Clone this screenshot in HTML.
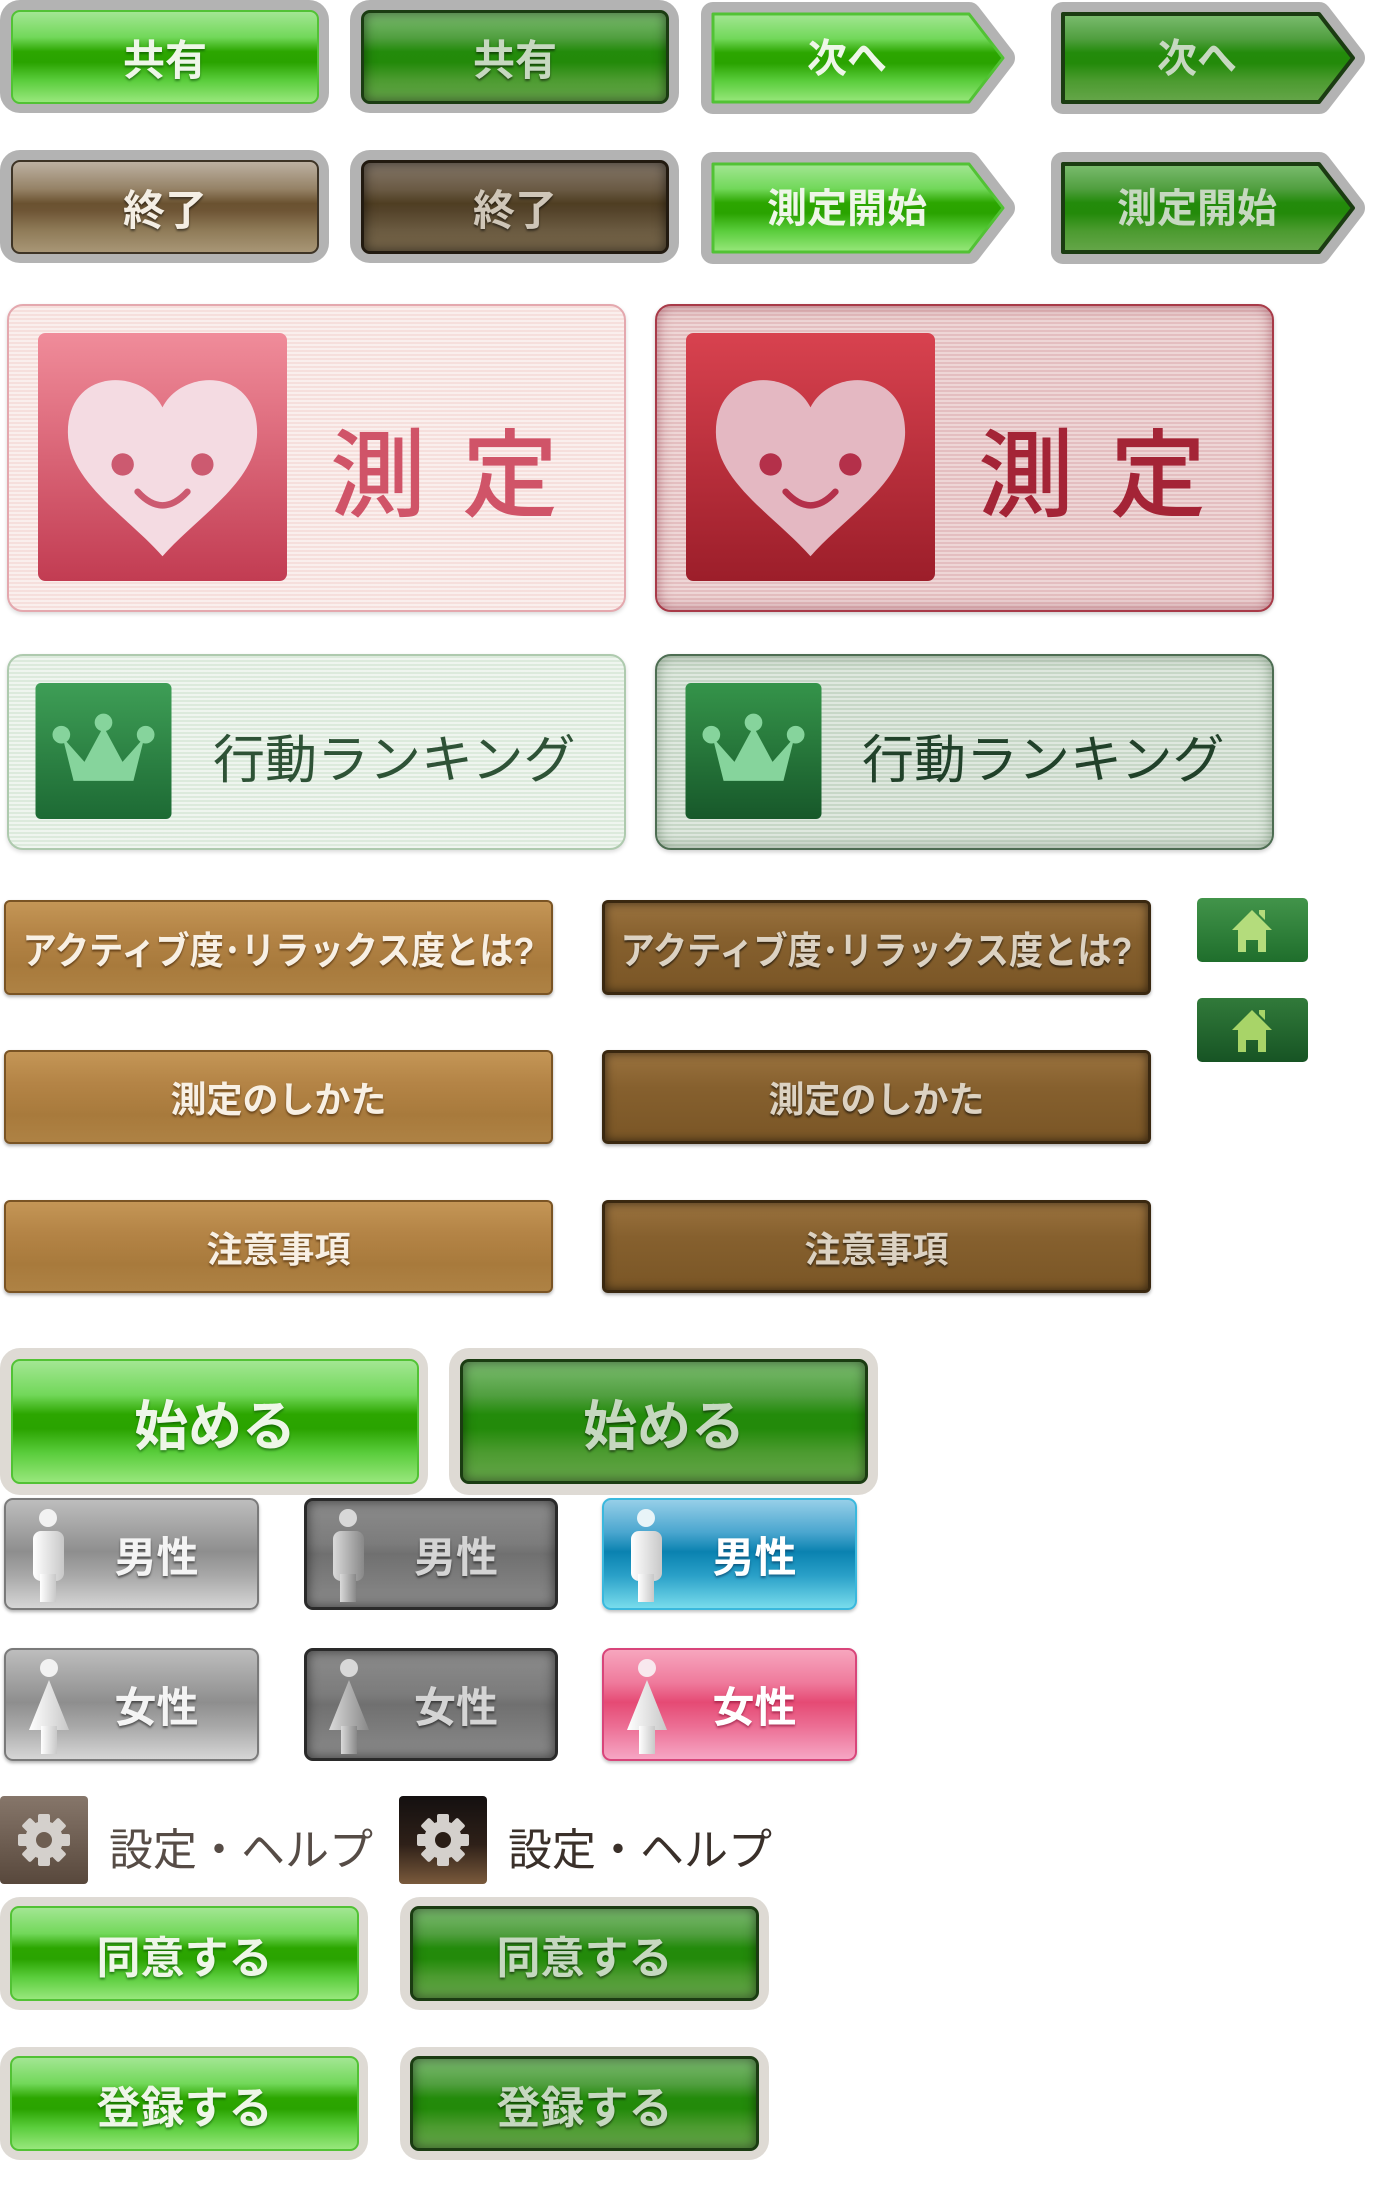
<!DOCTYPE html>
<html><head><meta charset="utf-8">
<style>
html,body{margin:0;padding:0;background:#fff;}
body{width:1400px;height:2200px;position:relative;overflow:hidden;font-family:"Liberation Sans","Noto Sans CJK JP",sans-serif;}
.a{position:absolute;box-sizing:border-box;}
.fr{position:absolute;background:#b3b3b3;border-radius:20px;}
.fr2{position:absolute;background:#dedad4;border-radius:20px;}
.btn{position:absolute;box-sizing:border-box;border-radius:9px;display:flex;align-items:center;justify-content:center;font-weight:bold;white-space:nowrap;}
.gl{background:linear-gradient(#a3e693 0%,#72d85a 28%,#2ca600 44%,#2aa300 56%,#5acd3c 76%,#98e77c 100%);border:2px solid #52c235;color:#eef6e8;text-shadow:0 2px 2px rgba(0,60,0,.5);}
.gd{background:linear-gradient(#7cbd70 0%,#519f40 28%,#238b0b 44%,#238a0a 56%,#4c9b30 76%,#66a64a 100%);border:3px solid #1b3c12;box-shadow:inset 0 0 12px rgba(0,0,0,.55);color:#c6d8c0;text-shadow:0 2px 2px rgba(0,0,0,.5);}
.bl{background:linear-gradient(#bdb1a2 0%,#958266 30%,#6a5230 46%,#6e5535 54%,#8f7b58 76%,#a89676 100%);border:2px solid #3e3426;color:#f4eee4;text-shadow:0 2px 2px rgba(0,0,0,.5);}
.bd{background:linear-gradient(#85786a 0%,#6a5a44 30%,#4f3e22 46%,#54432a 54%,#6a5a40 76%,#77664a 100%);border:3px solid #221a10;box-shadow:inset 0 0 12px rgba(0,0,0,.6);color:#cfc6b8;text-shadow:0 2px 2px rgba(0,0,0,.5);}
.wl{background:linear-gradient(#c49656 0%,#b48446 35%,#a87a3c 70%,#ae8244 100%);border:2px solid #7a5424;box-shadow:0 2px 3px rgba(0,0,0,.3);color:#f8f0e4;text-shadow:0 2px 2px rgba(60,30,0,.6);border-radius:6px;}
.wd{background:linear-gradient(#9a723e 0%,#86602e 40%,#7a5626 100%);border:3px solid #3a2810;box-shadow:inset 0 0 10px rgba(0,0,0,.6),0 2px 3px rgba(0,0,0,.3);color:#dcd2c2;text-shadow:0 2px 2px rgba(0,0,0,.6);border-radius:6px;}
.sl{background:linear-gradient(#bdbdbd 0%,#a0a0a0 30%,#8e8e8e 48%,#a8a8a8 70%,#d6d6d6 100%);border:2px solid #7a7a7a;box-shadow:0 2px 3px rgba(0,0,0,.3);color:#f4f4f4;text-shadow:0 2px 2px rgba(0,0,0,.5);}
.sd{background:linear-gradient(#8c8c8c 0%,#7c7c7c 40%,#707070 50%,#8a8a8a 100%);border:3px solid #2a2a2a;box-shadow:inset 0 0 12px rgba(0,0,0,.6);color:#d4d4d4;text-shadow:0 2px 2px rgba(0,0,0,.5);}
.sb{background:linear-gradient(#96cfe8 0%,#4aa6cf 30%,#0a82b0 48%,#2aa0c8 70%,#78dcec 100%);border:2px solid #3ab8dd;box-shadow:0 2px 3px rgba(0,0,0,.25);color:#fff;text-shadow:0 2px 2px rgba(0,40,80,.5);}
.sp{background:linear-gradient(#f7a6be 0%,#ef7a9c 30%,#e54a74 48%,#ec6e94 70%,#f6a6c4 100%);border:2px solid #d8457a;box-shadow:0 2px 3px rgba(0,0,0,.25);color:#fff;text-shadow:0 2px 2px rgba(120,0,40,.5);}
.card{position:absolute;box-sizing:border-box;border-radius:16px;}
.pk1{background:repeating-linear-gradient(0deg,rgba(255,255,255,.35) 0 2px,rgba(230,170,170,.12) 2px 4px),#f8e6e3;border:2px solid #e4a8ae;box-shadow:0 2px 4px rgba(0,0,0,.15);}
.pk2{background:repeating-linear-gradient(0deg,rgba(255,255,255,.25) 0 2px,rgba(200,120,130,.12) 2px 4px),#e8c8c8;border:2px solid #a83a48;box-shadow:inset 0 0 14px rgba(120,20,40,.5),0 2px 4px rgba(0,0,0,.2);}
.gr1{background:repeating-linear-gradient(0deg,rgba(255,255,255,.35) 0 2px,rgba(150,190,150,.12) 2px 4px),#e6f0e6;border:2px solid #aecaae;box-shadow:0 2px 4px rgba(0,0,0,.15);}
.gr2{background:repeating-linear-gradient(0deg,rgba(255,255,255,.25) 0 2px,rgba(120,160,120,.14) 2px 4px),#d4e0d4;border:2px solid #4d6d52;box-shadow:inset 0 0 14px rgba(40,70,40,.45),0 2px 4px rgba(0,0,0,.2);}
.big{position:absolute;font-size:96px;font-weight:500;letter-spacing:36px;white-space:nowrap;}
.rk{position:absolute;font-size:52px;white-space:nowrap;}
.set{position:absolute;font-size:44px;color:#564c46;white-space:nowrap;letter-spacing:0px;}
</style></head><body>

<div class="fr" style="left:0;top:0;width:329px;height:113px"></div>
<div class="btn gl" style="left:11px;top:10px;width:308px;height:94px;font-size:42px">共有</div>
<div class="fr" style="left:350px;top:0;width:329px;height:113px"></div>
<div class="btn gd" style="left:361px;top:10px;width:308px;height:94px;font-size:42px">共有</div>

<svg class="a" style="left:697px;top:0" width="320" height="116">
<defs>
<linearGradient id="ga" x1="0" y1="0" x2="0" y2="1"><stop offset="0" stop-color="#a3e693"/><stop offset=".28" stop-color="#72d85a"/><stop offset=".44" stop-color="#2ca600"/><stop offset=".56" stop-color="#2aa300"/><stop offset=".76" stop-color="#5acd3c"/><stop offset="1" stop-color="#98e77c"/></linearGradient>
<linearGradient id="gb" x1="0" y1="0" x2="0" y2="1"><stop offset="0" stop-color="#7cbd70"/><stop offset=".28" stop-color="#519f40"/><stop offset=".44" stop-color="#238b0b"/><stop offset=".56" stop-color="#238a0a"/><stop offset=".76" stop-color="#4c9b30"/><stop offset="1" stop-color="#66a64a"/></linearGradient>
</defs>
<path d="M16,14 H272 L306,58 L272,102 H16 Z" fill="#b3b3b3" stroke="#b3b3b3" stroke-width="24" stroke-linejoin="round"/>
<path d="M16,14 H272 L306,58 L272,102 H16 Z" fill="url(#ga)" stroke="#52c235" stroke-width="3" stroke-linejoin="round"/>
<text x="150" y="72" font-size="40" font-weight="bold" fill="#eef6e8" text-anchor="middle" font-family="Liberation Sans,Noto Sans CJK JP,sans-serif">次へ</text>
</svg>
<svg class="a" style="left:1047px;top:0" width="320" height="116">
<path d="M16,14 H272 L306,58 L272,102 H16 Z" fill="#b3b3b3" stroke="#b3b3b3" stroke-width="24" stroke-linejoin="round"/>
<path d="M16,14 H272 L306,58 L272,102 H16 Z" fill="url(#gb)" stroke="#1b3c12" stroke-width="4" stroke-linejoin="round"/>
<text x="150" y="72" font-size="40" font-weight="bold" fill="#c6d8c0" text-anchor="middle" font-family="Liberation Sans,Noto Sans CJK JP,sans-serif">次へ</text>
</svg>

<div class="fr" style="left:0;top:150px;width:329px;height:113px"></div>
<div class="btn bl" style="left:11px;top:160px;width:308px;height:94px;font-size:42px">終了</div>
<div class="fr" style="left:350px;top:150px;width:329px;height:113px"></div>
<div class="btn bd" style="left:361px;top:160px;width:308px;height:94px;font-size:42px">終了</div>

<svg class="a" style="left:697px;top:150px" width="320" height="116">
<path d="M16,14 H272 L306,58 L272,102 H16 Z" fill="#b3b3b3" stroke="#b3b3b3" stroke-width="24" stroke-linejoin="round"/>
<path d="M16,14 H272 L306,58 L272,102 H16 Z" fill="url(#ga)" stroke="#52c235" stroke-width="3" stroke-linejoin="round"/>
<text x="150" y="72" font-size="40" font-weight="bold" fill="#eef6e8" text-anchor="middle" font-family="Liberation Sans,Noto Sans CJK JP,sans-serif">測定開始</text>
</svg>
<svg class="a" style="left:1047px;top:150px" width="320" height="116">
<path d="M16,14 H272 L306,58 L272,102 H16 Z" fill="#b3b3b3" stroke="#b3b3b3" stroke-width="24" stroke-linejoin="round"/>
<path d="M16,14 H272 L306,58 L272,102 H16 Z" fill="url(#gb)" stroke="#1b3c12" stroke-width="4" stroke-linejoin="round"/>
<text x="150" y="72" font-size="40" font-weight="bold" fill="#c6d8c0" text-anchor="middle" font-family="Liberation Sans,Noto Sans CJK JP,sans-serif">測定開始</text>
</svg>

<div class="card pk1" style="left:7px;top:304px;width:619px;height:308px"></div>
<svg class="a" style="left:38px;top:333px" width="249" height="248" viewBox="0 0 100 100" preserveAspectRatio="none">
<defs><linearGradient id="p1" x1="0" y1="0" x2="0" y2="1"><stop offset="0" stop-color="#f08c9a"/><stop offset="1" stop-color="#c23c52"/></linearGradient>
<linearGradient id="p2" x1="0" y1="0" x2="0" y2="1"><stop offset="0" stop-color="#d8424f"/><stop offset="1" stop-color="#9c1e2a"/></linearGradient></defs>
<rect width="100" height="100" rx="3" fill="url(#p1)"/>
<path d="M50,30 C42,14 12,14 12,40 C12,60 36,74 50,90 C64,74 88,60 88,40 C88,14 58,14 50,30 Z" fill="#f4dbe2"/>
<circle cx="34" cy="53" r="4.5" fill="#cc5a70"/><circle cx="66" cy="53" r="4.5" fill="#cc5a70"/>
<path d="M40,64 Q50,75 60,64" stroke="#cc5a70" stroke-width="2.6" fill="none" stroke-linecap="round"/>
</svg>
<div class="big" style="left:330px;top:398px;color:#d05468">測定</div>

<div class="card pk2" style="left:655px;top:304px;width:619px;height:308px"></div>
<svg class="a" style="left:686px;top:333px" width="249" height="248" viewBox="0 0 100 100" preserveAspectRatio="none">
<rect width="100" height="100" rx="3" fill="url(#p2)"/>
<path d="M50,30 C42,14 12,14 12,40 C12,60 36,74 50,90 C64,74 88,60 88,40 C88,14 58,14 50,30 Z" fill="#e4b8c2"/>
<circle cx="34" cy="53" r="4.5" fill="#b4304a"/><circle cx="66" cy="53" r="4.5" fill="#b4304a"/>
<path d="M40,64 Q50,75 60,64" stroke="#b4304a" stroke-width="2.6" fill="none" stroke-linecap="round"/>
</svg>
<div class="big" style="left:978px;top:398px;color:#a42436">測定</div>

<div class="card gr1" style="left:7px;top:654px;width:619px;height:196px"></div>
<svg class="a" style="left:35px;top:683px" width="137" height="136" viewBox="0 0 100 100">
<defs><linearGradient id="k1" x1="0" y1="0" x2="0" y2="1"><stop offset="0" stop-color="#3e9e56"/><stop offset="1" stop-color="#1d6a34"/></linearGradient>
<linearGradient id="k2" x1="0" y1="0" x2="0" y2="1"><stop offset="0" stop-color="#35944a"/><stop offset="1" stop-color="#17582a"/></linearGradient></defs>
<rect width="100" height="100" rx="4" fill="url(#k1)"/>
<path d="M20,40 L36,58 L50,32 L64,58 L80,40 L72,72 H28 Z" fill="#86d49c"/>
<circle cx="19" cy="38" r="6.5" fill="#86d49c"/><circle cx="50" cy="29" r="6.5" fill="#86d49c"/><circle cx="81" cy="38" r="6.5" fill="#86d49c"/>
</svg>
<div class="rk" style="left:213px;top:718px;color:#2e5236">行動ランキング</div>

<div class="card gr2" style="left:655px;top:654px;width:619px;height:196px"></div>
<svg class="a" style="left:685px;top:683px" width="137" height="136" viewBox="0 0 100 100">
<rect width="100" height="100" rx="4" fill="url(#k2)"/>
<path d="M20,40 L36,58 L50,32 L64,58 L80,40 L72,72 H28 Z" fill="#86d49c"/>
<circle cx="19" cy="38" r="6.5" fill="#86d49c"/><circle cx="50" cy="29" r="6.5" fill="#86d49c"/><circle cx="81" cy="38" r="6.5" fill="#86d49c"/>
</svg>
<div class="rk" style="left:862px;top:718px;color:#21412a">行動ランキング</div>

<div class="btn wl" style="left:4px;top:900px;width:549px;height:95px;font-size:38px"><span style="display:inline-block;transform:scaleX(.9)">アクティブ度･リラックス度とは?</span></div>
<div class="btn wd" style="left:602px;top:900px;width:549px;height:95px;font-size:38px"><span style="display:inline-block;transform:scaleX(.9)">アクティブ度･リラックス度とは?</span></div>
<div class="btn wl" style="left:4px;top:1050px;width:549px;height:94px;font-size:36px">測定のしかた</div>
<div class="btn wd" style="left:602px;top:1050px;width:549px;height:94px;font-size:36px">測定のしかた</div>
<div class="btn wl" style="left:4px;top:1200px;width:549px;height:93px;font-size:36px">注意事項</div>
<div class="btn wd" style="left:602px;top:1200px;width:549px;height:93px;font-size:36px">注意事項</div>

<svg class="a" style="left:1197px;top:898px" width="111" height="64" viewBox="0 0 111 64">
<defs><linearGradient id="h1" x1="0" y1="0" x2="0" y2="1"><stop offset="0" stop-color="#42944a"/><stop offset="1" stop-color="#1f6e2c"/></linearGradient>
<linearGradient id="h2" x1="0" y1="0" x2="0" y2="1"><stop offset="0" stop-color="#317a3a"/><stop offset="1" stop-color="#175424"/></linearGradient></defs>
<rect width="111" height="64" rx="5" fill="url(#h1)"/>
<path d="M55,12 L75,32 H69 V54 H61 V42 H49 V54 H41 V32 H35 Z M62,12 H68 V22 L62,16 Z" fill="#b4dc7c"/>
</svg>
<svg class="a" style="left:1197px;top:998px" width="111" height="64" viewBox="0 0 111 64">
<rect width="111" height="64" rx="5" fill="url(#h2)"/>
<path d="M55,12 L75,32 H69 V54 H61 V42 H49 V54 H41 V32 H35 Z M62,12 H68 V22 L62,16 Z" fill="#a8d468"/>
</svg>

<div class="fr2" style="left:0;top:1348px;width:428px;height:147px"></div>
<div class="btn gl" style="left:11px;top:1359px;width:408px;height:125px;font-size:54px">始める</div>
<div class="fr2" style="left:449px;top:1348px;width:429px;height:147px"></div>
<div class="btn gd" style="left:460px;top:1359px;width:408px;height:125px;font-size:54px">始める</div>

<svg width="0" height="0" style="position:absolute"><defs>
<linearGradient id="pw" x1="0" y1="0" x2="1" y2="0"><stop offset="0" stop-color="#ffffff"/><stop offset="1" stop-color="#c8c8c8"/></linearGradient>
<linearGradient id="pg" x1="0" y1="0" x2="1" y2="0"><stop offset="0" stop-color="#dadada"/><stop offset="1" stop-color="#888"/></linearGradient>
</defs></svg>
<div class="btn sl" style="left:4px;top:1498px;width:255px;height:112px;font-size:42px;padding-left:50px">男性</div>
<div class="btn sd" style="left:304px;top:1498px;width:254px;height:112px;font-size:42px;padding-left:50px">男性</div>
<div class="btn sb" style="left:602px;top:1498px;width:255px;height:112px;font-size:42px;padding-left:50px">男性</div>
<div class="btn sl" style="left:4px;top:1648px;width:255px;height:113px;font-size:42px;padding-left:50px">女性</div>
<div class="btn sd" style="left:304px;top:1648px;width:254px;height:113px;font-size:42px;padding-left:50px">女性</div>
<div class="btn sp" style="left:602px;top:1648px;width:255px;height:113px;font-size:42px;padding-left:50px">女性</div>

<svg class="a" style="left:30px;top:1508px" width="40" height="96" viewBox="0 0 40 96"><circle cx="18" cy="10" r="9" fill="#f2f2f2"/><rect x="3" y="23" width="31" height="50" rx="8" fill="url(#pw)"/><rect x="10" y="66" width="16" height="28" fill="url(#pw)"/></svg>
<svg class="a" style="left:330px;top:1508px" width="40" height="96" viewBox="0 0 40 96"><circle cx="18" cy="10" r="9" fill="#d8d8d8"/><rect x="3" y="23" width="31" height="50" rx="8" fill="url(#pg)"/><rect x="10" y="66" width="16" height="28" fill="url(#pg)"/></svg>
<svg class="a" style="left:628px;top:1508px" width="40" height="96" viewBox="0 0 40 96"><circle cx="18" cy="10" r="9" fill="#e8f4f8"/><rect x="3" y="23" width="31" height="50" rx="8" fill="url(#pw)"/><rect x="10" y="66" width="16" height="28" fill="url(#pw)"/></svg>

<svg class="a" style="left:26px;top:1658px" width="46" height="98" viewBox="0 0 46 98"><circle cx="23" cy="10" r="9" fill="#f2f2f2"/><path d="M23,22 L43,72 H3 Z" fill="url(#pw)"/><rect x="15" y="68" width="16" height="28" fill="url(#pw)"/></svg>
<svg class="a" style="left:326px;top:1658px" width="46" height="98" viewBox="0 0 46 98"><circle cx="23" cy="10" r="9" fill="#d8d8d8"/><path d="M23,22 L43,72 H3 Z" fill="url(#pg)"/><rect x="15" y="68" width="16" height="28" fill="url(#pg)"/></svg>
<svg class="a" style="left:624px;top:1658px" width="46" height="98" viewBox="0 0 46 98"><circle cx="23" cy="10" r="9" fill="#f8e8ee"/><path d="M23,22 L43,72 H3 Z" fill="url(#pw)"/><rect x="15" y="68" width="16" height="28" fill="url(#pw)"/></svg>

<svg class="a" style="left:0;top:1796px" width="88" height="88" viewBox="0 0 88 88">
<defs><linearGradient id="s1" x1="0" y1="0" x2="0" y2="1"><stop offset="0" stop-color="#86766a"/><stop offset="1" stop-color="#58483c"/></linearGradient>
<linearGradient id="s2" x1="0" y1="0" x2="0" y2="1"><stop offset="0" stop-color="#141010"/><stop offset=".55" stop-color="#2e2018"/><stop offset="1" stop-color="#7a5a3c"/></linearGradient>
<g id="gear"><g fill="#d4d0cc"><circle cx="44" cy="44" r="19"/><rect x="38" y="18" width="12" height="52" rx="2"/><rect x="38" y="18" width="12" height="52" rx="2" transform="rotate(45 44 44)"/><rect x="38" y="18" width="12" height="52" rx="2" transform="rotate(90 44 44)"/><rect x="38" y="18" width="12" height="52" rx="2" transform="rotate(135 44 44)"/></g></g></defs>
<rect width="88" height="88" rx="4" fill="url(#s1)"/><use href="#gear"/><circle cx="44" cy="44" r="8" fill="#6e5e52"/>
</svg>
<div class="set" style="left:109px;top:1814px">設定・ヘルプ</div>
<svg class="a" style="left:399px;top:1796px" width="88" height="88" viewBox="0 0 88 88">
<rect width="88" height="88" rx="4" fill="url(#s2)"/><use href="#gear"/><circle cx="44" cy="44" r="8" fill="#2a1e16"/>
</svg>
<div class="set" style="left:508px;top:1814px;color:#3a302a">設定・ヘルプ</div>

<div class="fr2" style="left:0;top:1897px;width:368px;height:113px"></div>
<div class="btn gl" style="left:10px;top:1906px;width:349px;height:95px;font-size:44px">同意する</div>
<div class="fr2" style="left:400px;top:1897px;width:369px;height:113px"></div>
<div class="btn gd" style="left:410px;top:1906px;width:349px;height:95px;font-size:44px">同意する</div>

<div class="fr2" style="left:0;top:2047px;width:368px;height:113px"></div>
<div class="btn gl" style="left:10px;top:2056px;width:349px;height:95px;font-size:44px">登録する</div>
<div class="fr2" style="left:400px;top:2047px;width:369px;height:113px"></div>
<div class="btn gd" style="left:410px;top:2056px;width:349px;height:95px;font-size:44px">登録する</div>

</body></html>
